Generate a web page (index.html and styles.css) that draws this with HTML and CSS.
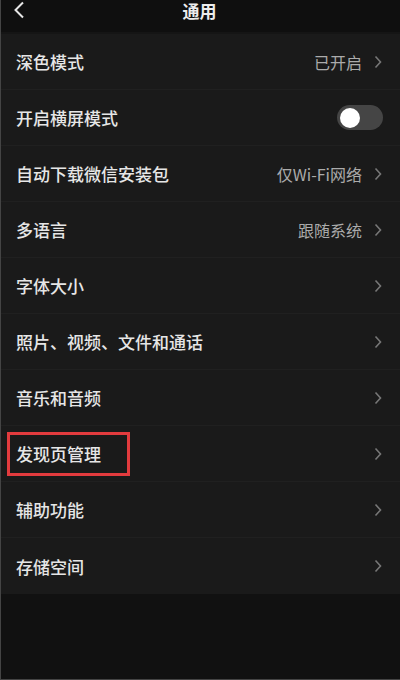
FILE: index.html
```html
<!DOCTYPE html>
<html lang="zh-CN">
<head>
  <meta charset="UTF-8" />
  <title>通用</title>
  <link rel="stylesheet" href="styles.css">
</head>
<body>
  <div class="screen">
    <div class="header">
      <svg class="back" width="12" height="18" viewBox="0 0 12 18"><path d="M10 1.5 L2.5 9 L10 16.5" fill="none" stroke="#e6e6e6" stroke-width="2"/></svg>
      <span class="title">通用</span>
      <span class="spacer"></span>
    </div>
    <div class="list">
      <div class="row">
        <span class="label">深色模式</span>
        <span class="value">已开启</span>
        <span class="arrow"><svg width="8" height="14" viewBox="0 0 8 14"><path d="M1.5 1.5 L6.5 7 L1.5 12.5" fill="none" stroke="#777" stroke-width="1.6"/></svg></span>
      </div>
      <div class="row">
        <span class="label">开启横屏模式</span>
        <span class="switch"><span class="knob"></span></span>
      </div>
      <div class="row">
        <span class="label">自动下载微信安装包</span>
        <span class="value">仅Wi-Fi网络</span>
        <span class="arrow"><svg width="8" height="14" viewBox="0 0 8 14"><path d="M1.5 1.5 L6.5 7 L1.5 12.5" fill="none" stroke="#777" stroke-width="1.6"/></svg></span>
      </div>
      <div class="row">
        <span class="label">多语言</span>
        <span class="value">跟随系统</span>
        <span class="arrow"><svg width="8" height="14" viewBox="0 0 8 14"><path d="M1.5 1.5 L6.5 7 L1.5 12.5" fill="none" stroke="#777" stroke-width="1.6"/></svg></span>
      </div>
      <div class="row">
        <span class="label">字体大小</span>
        <span class="arrow"><svg width="8" height="14" viewBox="0 0 8 14"><path d="M1.5 1.5 L6.5 7 L1.5 12.5" fill="none" stroke="#777" stroke-width="1.6"/></svg></span>
      </div>
      <div class="row">
        <span class="label">照片、视频、文件和通话</span>
        <span class="arrow"><svg width="8" height="14" viewBox="0 0 8 14"><path d="M1.5 1.5 L6.5 7 L1.5 12.5" fill="none" stroke="#777" stroke-width="1.6"/></svg></span>
      </div>
      <div class="row">
        <span class="label">音乐和音频</span>
        <span class="arrow"><svg width="8" height="14" viewBox="0 0 8 14"><path d="M1.5 1.5 L6.5 7 L1.5 12.5" fill="none" stroke="#777" stroke-width="1.6"/></svg></span>
      </div>
      <div class="row">
        <span class="label marked">发现页管理</span>
        <span class="arrow"><svg width="8" height="14" viewBox="0 0 8 14"><path d="M1.5 1.5 L6.5 7 L1.5 12.5" fill="none" stroke="#777" stroke-width="1.6"/></svg></span>
      </div>
      <div class="row">
        <span class="label">辅助功能</span>
        <span class="arrow"><svg width="8" height="14" viewBox="0 0 8 14"><path d="M1.5 1.5 L6.5 7 L1.5 12.5" fill="none" stroke="#777" stroke-width="1.6"/></svg></span>
      </div>
      <div class="row">
        <span class="label">存储空间</span>
        <span class="arrow"><svg width="8" height="14" viewBox="0 0 8 14"><path d="M1.5 1.5 L6.5 7 L1.5 12.5" fill="none" stroke="#777" stroke-width="1.6"/></svg></span>
      </div>
    </div>
  </div>
</body>
</html>
```

FILE: styles.css
```css
body {
  margin: 0;
  padding: 0;
  background: #111;
  font-family: "Noto Sans CJK SC", "Noto Sans", sans-serif;
}
.screen {
  width: 400px;
  height: 680px;
  box-sizing: border-box;
  border-left: 1px solid #444;
  border-bottom: 1px solid #444;
  background-color: #111;
  overflow: hidden;
}
.header {
  height: 32px;
  display: flex;
  align-items: flex-start;
  justify-content: space-between;
  padding: 0 14px 0 12px;
  background-color: #0f0f0f;
  border-bottom: 2px solid #151515;
}
.header .back {
  margin-top: 1px;
}
.title {
  color: #ececec;
  font-size: 17px;
  font-weight: bold;
  line-height: 20px;
  margin-top: 1px;
}
.spacer {
  width: 12px;
}
.list {
  background-color: #1a1a1a;
}
.row {
  height: 56px;
  box-sizing: border-box;
  display: flex;
  align-items: center;
  padding: 0 18px 0 15px;
  border-bottom: 1px solid #202020;
}
.row:last-child {
  border-bottom: none;
}
.label {
  flex: 1;
  color: #e6e6e6;
  font-size: 17px;
  font-weight: 500;
}
.label.marked {
  flex: none;
  margin-left: -9px;
  margin-right: auto;
  padding: 6px 26px 7px 6px;
  border: 3px solid #e23b3e;
}
.value {
  color: #ababab;
  font-size: 16px;
  margin-right: 12px;
}
.arrow {
  display: flex;
  align-items: center;
}
.switch {
  width: 46px;
  height: 25px;
  border-radius: 13px;
  background-color: #454545;
  display: flex;
  align-items: center;
  padding: 0 3px;
  box-sizing: border-box;
  margin-right: -1px;
}
.knob {
  width: 20px;
  height: 20px;
  border-radius: 50%;
  background-color: #fff;
}
```
